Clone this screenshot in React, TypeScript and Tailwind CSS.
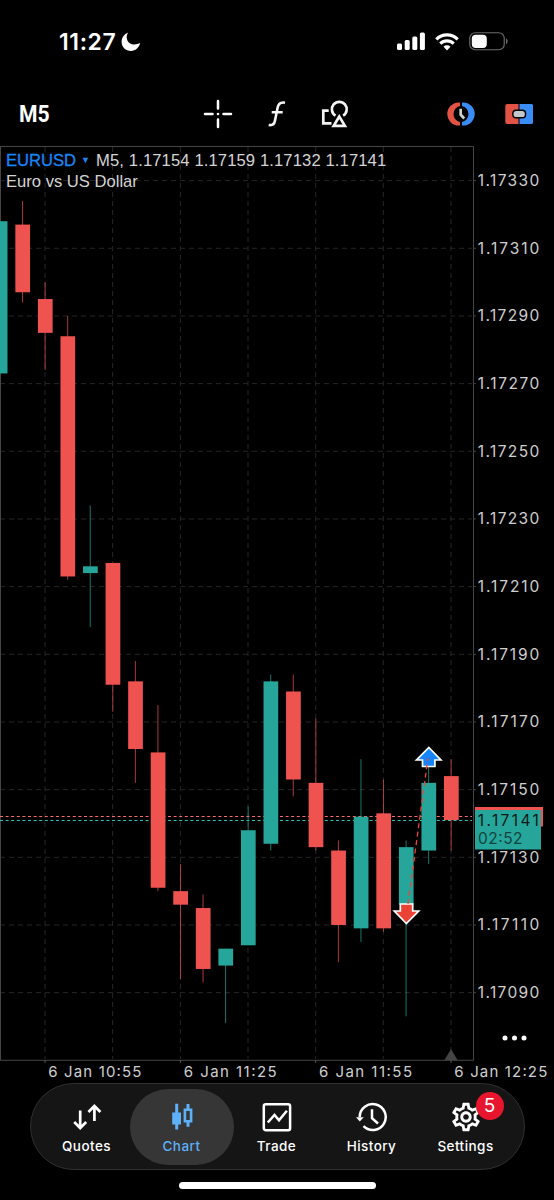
import type { ReactNode } from "react";
import { MdOutlineSettings } from "react-icons/md";

type Candle = { open: number; close: number; high: number; low: number };

// Prices are stored as the last digits of 1.xxxxx
const candles: Candle[] = [
  { open: 17273, close: 17318, high: 17318, low: 17273 },
  { open: 17317, close: 17297, high: 17324, low: 17294 },
  { open: 17295, close: 17285, high: 17300, low: 17274 },
  { open: 17284, close: 17213, high: 17290, low: 17212 },
  { open: 17214, close: 17216, high: 17234, low: 17198 },
  { open: 17217, close: 17181, high: 17217, low: 17173 },
  { open: 17182, close: 17162, high: 17188, low: 17152 },
  { open: 17161, close: 17121, high: 17175, low: 17120 },
  { open: 17120, close: 17116, high: 17128, low: 17094 },
  { open: 17115, close: 17097, high: 17119, low: 17093 },
  { open: 17098, close: 17103, high: 17103, low: 17081 },
  { open: 17104, close: 17138, high: 17145, low: 17104 },
  { open: 17134, close: 17182, high: 17184, low: 17132 },
  { open: 17179, close: 17153, high: 17184, low: 17148 },
  { open: 17152, close: 17133, high: 17171, low: 17132 },
  { open: 17132, close: 17110, high: 17135, low: 17099 },
  { open: 17109, close: 17142, high: 17159, low: 17105 },
  { open: 17143, close: 17109, high: 17153, low: 17108 },
  { open: 17116, close: 17133, high: 17135, low: 17083 },
  { open: 17132, close: 17152, high: 17159, low: 17128 },
  { open: 17154, close: 17141, high: 17159, low: 17132 },
];

const priceTicks = [
  17330, 17310, 17290, 17270, 17250, 17230, 17210, 17190, 17170, 17150, 17130, 17110, 17090,
];

const timeTicks = [
  { x: 45, label: "6 Jan 10:55" },
  { x: 180.4, label: "6 Jan 11:25" },
  { x: 315.7, label: "6 Jan 11:55" },
  { x: 451, label: "6 Jan 12:25" },
];

const gridX = [45, 112.6, 180.4, 248, 315.7, 383.3, 451];

const STEP = 22.56;
const toX = (i: number) => i * STEP;
const toY = (price: number) => 34.6 + (17330 - price) * 3.3835;

function StatusBar() {
  return (
    <div className="flex h-[83px] items-center justify-between pl-[59px] pr-[46px]">
      <div className="flex items-center gap-[5px]">
        <span className="pt-px text-[23px] font-semibold leading-none tracking-[0.6px]">11:27</span>
        <svg width="20" height="20" viewBox="0 0 20 20" fill="#fff">
          <path d="M7.2.4C6 2 5.600 3.700 5.700 5.400c.3 4.300 3.600 7.100 7.700 7.100 2 0 4-.6 5.800-1.400C17.900 15.800 14.500 19 10 19 4.700 19 .6 15.100.6 10 .6 5.600 3.200 1.800 7.200.4Z" />
        </svg>
      </div>
      <div className="flex items-center">
        <svg width="28" height="19" viewBox="0 0 28 19" fill="#fff">
          <rect x="0" y="11.500" width="5" height="6.500" rx="1.500" />
          <rect x="7.700" y="8" width="5" height="10" rx="1.500" />
          <rect x="15.300" y="4.500" width="5" height="13.500" rx="1.500" />
          <rect x="22.900" y="0.500" width="5" height="17.500" rx="1.500" />
        </svg>
        <svg className="ml-2.5" width="24" height="18" viewBox="0 0 24 18" fill="none" stroke="#fff">
          <path d="M1.300 6.300a15.200 15.200 0 0 1 21.400 0" strokeWidth="3.200" />
          <path d="M5.300 10.600a9.500 9.500 0 0 1 13.400 0" strokeWidth="3.100" />
          <path d="M12 17.400l-3.500-3.600a5 5 0 0 1 7 0Z" fill="#fff" stroke="none" />
        </svg>
        <svg className="ml-2.5" width="39" height="19" viewBox="0 0 39 19">
          <rect x="0.750" y="0.750" width="34.500" height="17" rx="5.500" fill="none" stroke="#6b6b6b" strokeWidth="1.200" />
          <rect x="2.800" y="2.700" width="15" height="13.200" rx="4" fill="#fff" />
          <path d="M37 6.300v6c1-.5 1.600-1.600 1.600-3s-.6-2.500-1.600-3Z" fill="#6b6b6b" />
        </svg>
      </div>
    </div>
  );
}

function Toolbar() {
  return (
    <div className="flex h-[63px] items-center pb-0.5 pl-[19px] pr-[21px]">
      <span className="w-[184px] origin-left scale-x-88 font-['Roboto'] text-[24px] font-bold leading-none">
        M5
      </span>
      <button type="button" aria-label="Crosshair">
        <svg width="30" height="30" viewBox="0 0 30 30" stroke="#fff" strokeWidth="2.500" strokeLinecap="round">
          <path d="M15 2v7.500M15 20.500V28M2 15h7.500M20.500 15H28" />
          <circle cx="15" cy="15" r="1.300" fill="#fff" stroke="none" />
        </svg>
      </button>
      <button type="button" aria-label="Indicators" className="ml-[34px]">
        <svg width="20" height="26" viewBox="0 0 20 26" fill="none" stroke="#f4f4f4" strokeWidth="2.600">
          <path d="M18 1.700c-4.200-.7-6.600 1-7.400 5L7.900 20c-.7 3.500-2.600 4.600-6.200 4M4.700 11.200h11" />
        </svg>
      </button>
      <button type="button" aria-label="Objects" className="ml-[34px]">
        <svg width="28" height="29" viewBox="0 0 28 29" fill="none" stroke="#f4f4f4" strokeWidth="2.700">
          <path d="M7.700 11.600H2.300v12.800h8.200" />
          <path d="M14.500 16.600a7.400 7.400 0 1 1 7.600 0" />
          <path d="M18.300 17.500l-5.600 9.300h11.200Z" />
        </svg>
      </button>
      <button type="button" aria-label="One click trading" className="ml-auto">
        <svg width="28" height="24" viewBox="0 0 28 24">
          <path d="M13 .5v3.400a8.300 8.300 0 0 0 0 16.200v3.400h-1.200A11.500 11.500 0 0 1 11.800.5Z" fill="#e25345" />
          <path d="M15 .5v3.400a8.300 8.300 0 0 1 0 16.200v3.400h1.200A11.500 11.500 0 0 0 16.200.5Z" fill="#3a8cf6" />
          <path d="M13.700 6.800v6l3.500 3.700" fill="none" stroke="#d0d2d2" strokeWidth="2.700" />
        </svg>
      </button>
      <button type="button" aria-label="New order" className="ml-[30px]">
        <svg width="28" height="22" viewBox="0 0 28 22">
          <path d="M13.500 1H2.300A2 2 0 0 0 .3 3v16a2 2 0 0 0 2 2h11.200Z" fill="#e25345" />
          <path d="M14.500 1h11.700a2 2 0 0 1 2 2v16a2 2 0 0 1-2 2H14.500Z" fill="#3a8cf6" />
          <rect x="7.200" y="6.500" width="14" height="9" rx="3.800" fill="#000" />
          <rect x="8.600" y="7.900" width="11.200" height="6.200" rx="2.600" fill="#c3c8ca" />
        </svg>
      </button>
    </div>
  );
}

function PriceChart() {
  return (
    <svg className="block" width="554" height="937" viewBox="0 0 554 937" fontFamily="Inter, sans-serif">
      <g stroke="#242529" strokeWidth="1" strokeDasharray="5 4">
        {priceTicks.map((p) => (
          <path key={p} d={`M0 ${toY(p)}H472`} />
        ))}
        {gridX.map((x) => (
          <path key={x} d={`M${x} 1V913`} />
        ))}
      </g>

      <path d="M0 .5H473.500V914.300H0M.5 .5V914" fill="none" stroke="#454545" />
      {timeTicks.map((t) => (
        <path key={t.x} d={`M${t.x} 914v3`} stroke="#555" />
      ))}
      <path d="M444.500 914l6.500-11 6.500 11Z" fill="#444" />

      {/* ask and bid levels */}
      <path d="M0 670.500H472" stroke="#fb6a66" strokeWidth="1.200" strokeDasharray="3 2.600" />
      <path d="M0 674.500H472" stroke="#35c2b0" strokeWidth="1.200" strokeDasharray="3 2.600" />

      {candles.map((c, i) => {
        const up = c.close >= c.open;
        const top = toY(Math.max(c.open, c.close));
        const bottom = toY(Math.min(c.open, c.close));
        const color = up ? "#26a69a" : "#ef5350";
        return (
          <g key={i}>
            <path
              d={`M${toX(i)} ${toY(c.high)}V${toY(c.low)}`}
              stroke={color}
              strokeWidth="1"
              strokeOpacity="0.700"
            />
            <rect x={toX(i) - 7.2} y={top} width="14.700" height={bottom - top} fill={color} />
          </g>
        );
      })}

      {/* closed deal: entry and exit arrows */}
      <path
        d="M406.300 777.500l-12-12.500h6v-7h12.400v7h6Z"
        fill="#ea4335"
        stroke="#fff"
        strokeWidth="1.700"
      />
      <path
        d="M428.900 601.500l12 12.500h-6v6.500h-12.400V614h-6Z"
        fill="#1684fc"
        stroke="#fff"
        strokeWidth="1.700"
      />
      <path d="M408 758L428 612" stroke="#f04438" strokeWidth="1.300" strokeDasharray="5 3.500" />

      <g fill="#cfcfcf" fontSize="15.500">
        {priceTicks.map((p) => (
          <g key={p}>
            <path d={`M473 ${toY(p)}h3`} stroke="#454545" />
            <text x="477.800" y={toY(p) + 5.5} textLength="61.500">
              {`1.${p}`}
            </text>
          </g>
        ))}
        {timeTicks.map((t) => (
          <text key={t.x} x={t.x + 3.3} y="931" textLength="93" fontSize="15">
            {t.label}
          </text>
        ))}
      </g>

      <rect x="475" y="661" width="68" height="19.500" fill="#ef5350" />
      <rect x="475" y="664" width="66" height="39.500" fill="#26a69a" />
      <g fill="#0c1716" fontSize="15.500">
        <text x="477.800" y="679.700" textLength="61">
          1.17141
        </text>
        <text x="478" y="698" textLength="44.500" fill="#12433e">
          02:52
        </text>
      </g>

      <g fill="#fff">
        <circle cx="505" cy="892" r="2.500" />
        <circle cx="514.500" cy="892" r="2.500" />
        <circle cx="524" cy="892" r="2.500" />
      </g>
    </svg>
  );
}

function NavIcon({ children }: { children: ReactNode }) {
  return (
    <svg width="32" height="30" viewBox="0 0 32 30" fill="none" stroke="currentColor" strokeWidth="2.500">
      {children}
    </svg>
  );
}

function NavItem({ label, active, badge, children }: {
  label: string;
  active?: boolean;
  badge?: number;
  children: ReactNode;
}) {
  return (
    <button
      type="button"
      className={
        active
          ? "relative flex h-[76px] w-[104px] flex-col items-center rounded-full bg-[#363636] pt-[13px] text-[#5eb0f7]"
          : "relative flex h-[76px] w-[86px] flex-col items-center pt-[13px] text-white"
      }
    >
      <span className="flex h-[30px] items-center justify-center">{children}</span>
      <span className="mt-1.5 text-[13.500px] font-medium leading-4 tracking-[0.45px]">{label}</span>
      {badge && (
        <span className="absolute left-[53px] top-[3px] flex size-[28px] items-center justify-center rounded-full bg-[#e8152f] text-[19px] leading-none text-white">
          {badge}
        </span>
      )}
    </button>
  );
}

function BottomNav() {
  return (
    <nav className="mx-auto flex h-[87px] w-[495px] items-center rounded-full border border-[#303030] bg-[#151515] pl-[13px]">
      <NavItem label="Quotes">
        <NavIcon>
          <path d="M9.200 8.500V26M3.200 20l6 6 6-6M23.400 19V4M17.400 10l6-6 6 6" strokeWidth="2.700" />
        </NavIcon>
      </NavItem>
      <NavItem label="Chart" active>
        <NavIcon>
          <g fill="currentColor" stroke="none">
            <path d="M9.200 1.800h3v8.800H15v12h-2.800v5h-3v-5H6.200v-12h3Z" />
            <path d="M20.500 2h3v4.500h2.900v14h-2.900v4.200h-3v-4.200h-2.900v-14h2.900Zm-.3 7v9h3.600V9Z" fillRule="evenodd" />
          </g>
        </NavIcon>
      </NavItem>
      <NavItem label="Trade">
        <NavIcon>
          <rect x="2.800" y="2.200" width="26.300" height="26" rx="2" />
          <path d="M6.800 20.500l6.700-7.500 4.500 5.200 7.900-9.500" />
        </NavIcon>
      </NavItem>
      <div className="w-[9px]" />
      <NavItem label="History">
        <NavIcon>
          <path d="M3.700 15A13 13 0 1 1 7.500 24.200" />
          <path d="M0 15.200h7.800L3.800 19.500Z" fill="currentColor" stroke="none" />
          <path d="M16 7.300v9l6 5.200" />
        </NavIcon>
      </NavItem>
      <div className="w-[8px]" />
      <NavItem label="Settings" badge={5}>
        <MdOutlineSettings className="size-[34px] shrink-0" />
      </NavItem>
    </nav>
  );
}

export default function App() {
  return (
    <div className="flex h-[1200px] w-[554px] flex-col overflow-hidden bg-black font-['Inter',sans-serif] text-white">
      <StatusBar />
      <Toolbar />
      <main className="relative h-[937px] shrink-0">
        <PriceChart />
        <div className="absolute left-1.5 top-1 whitespace-nowrap font-['Liberation_Sans',sans-serif] text-[16.600px] leading-[21px] text-[#d4d4d4]">
          <div className="flex items-center">
            <span className="text-[#1a86f5] [-webkit-text-stroke:0.3px]">EURUSD</span>
            <span className="ml-1 mr-[5px] w-[11px] text-center text-[9px] text-[#1a86f5]">▼</span>
            <span className="tracking-[0.12px]">M5, 1.17154 1.17159 1.17132 1.17141</span>
          </div>
          <div>Euro vs US Dollar</div>
        </div>
      </main>
      <BottomNav />
      <div className="mx-auto mt-3 h-[7px] w-[197px] rounded-full bg-white" />
    </div>
  );
}
